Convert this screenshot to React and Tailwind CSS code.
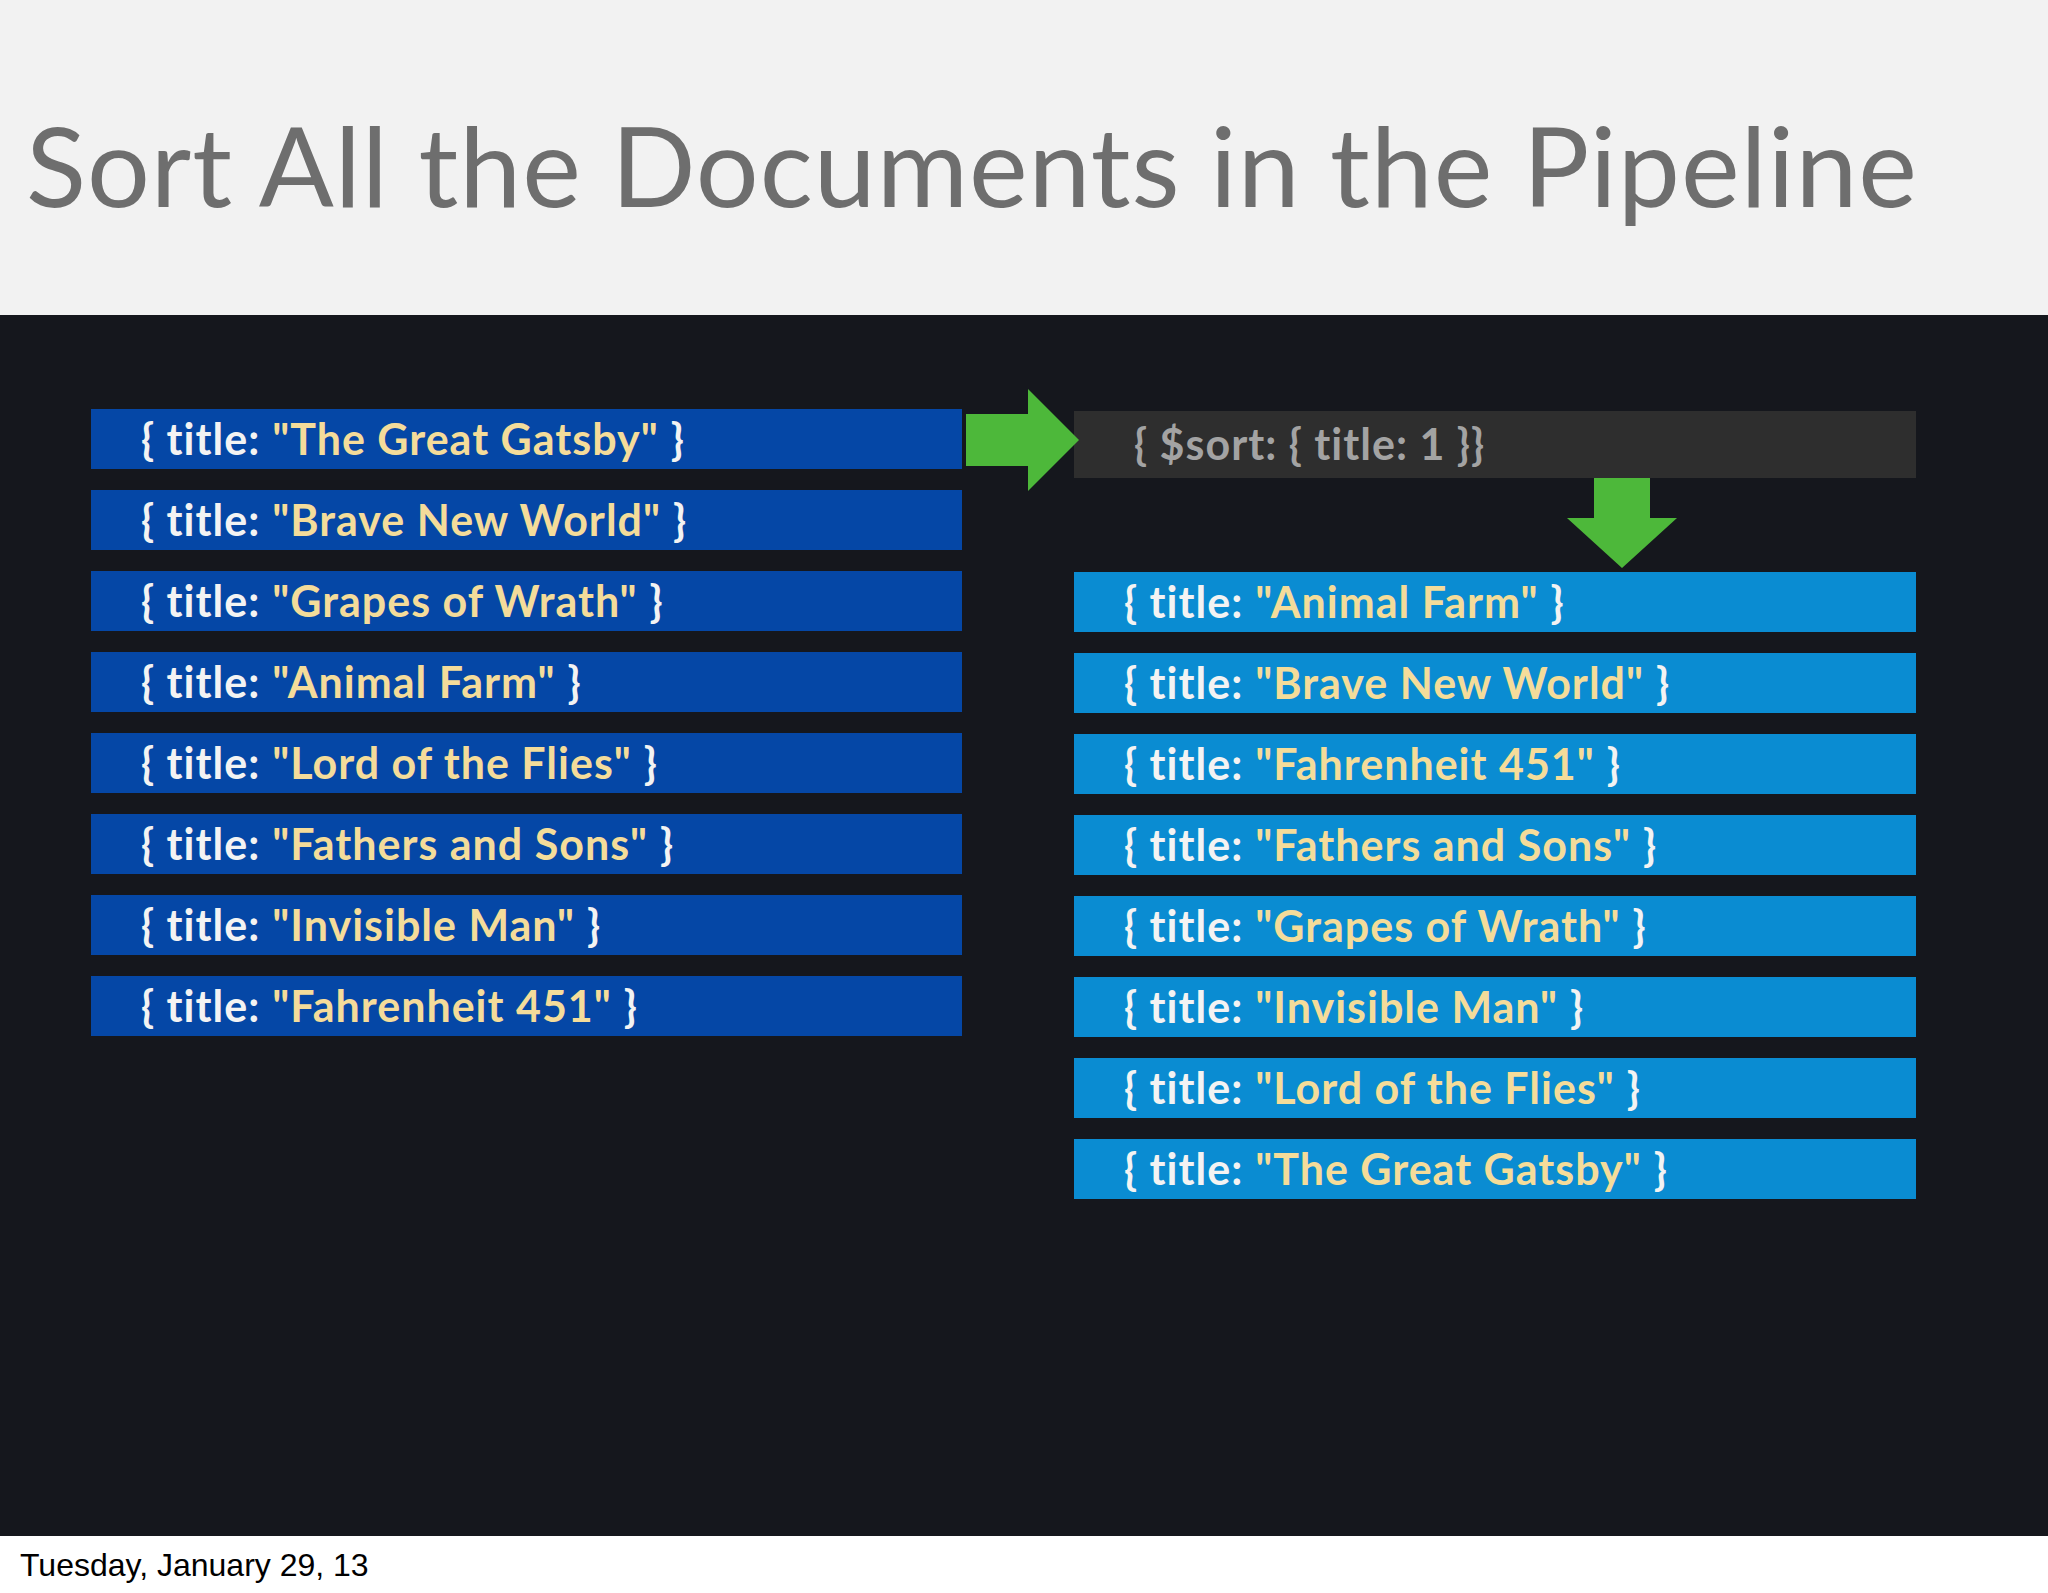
import React from 'react';

const left = ['The Great Gatsby', 'Brave New World', 'Grapes of Wrath', 'Animal Farm', 'Lord of the Flies', 'Fathers and Sons', 'Invisible Man', 'Fahrenheit 451'];
const right = ['Animal Farm', 'Brave New World', 'Fahrenheit 451', 'Fathers and Sons', 'Grapes of Wrath', 'Invisible Man', 'Lord of the Flies', 'The Great Gatsby'];

const Doc = ({ title, light }) => (
    <div className={`h-[60px] flex items-center pl-[50px] text-[43px] font-bold tracking-[1px] ${light ? 'bg-[#0a8cd2]' : 'bg-[#0547a6]'}`}>
        <span className="text-[#f3f3f3]">{'{ title: '}</span>
        <span className="text-[#f4dc9a] ml-[12px]">"{title}"</span>
        <span className="text-[#f3f3f3] ml-[12px]">{'}'}</span>
    </div>
);

export default function App() {
    return (
        <div className="w-[2048px] h-[1593px] flex flex-col bg-white" style={{ fontFamily: 'Lato, "Open Sans", sans-serif' }}>
            <div className="h-[315px] bg-[#f2f2f2] flex items-center pl-[26px] pt-[14px]">
                <h1 className="text-[111px] text-[#6e6e6e] tracking-[1px] font-normal">Sort All the Documents in the Pipeline</h1>
            </div>
            <div className="h-[1221px] bg-[#15171d] flex pl-[91px]">
                <div className="w-[871px] mt-[94px] flex flex-col gap-[21px]">
                    {left.map((t) => <Doc key={t} title={t} />)}
                </div>
                <div className="w-[1079px] relative">
                    <svg className="absolute left-[4px] top-[74px]" width="113" height="102" viewBox="0 0 113 102">
                        <polygon points="0,25 62,25 62,0 113,51 62,102 62,77 0,77" fill="#4db83a" />
                    </svg>
                </div>
                <div className="w-[842px] -ml-[967px] mt-[96px] flex flex-col">
                    <div className="h-[67px] bg-[#2e2e2e] flex items-center pl-[60px] text-[43px] font-bold text-[#a3a3a3] tracking-[1px]">
                        {'{ $sort: { title: 1 }}'}
                    </div>
                    <div className="h-[94px] flex justify-center pl-[254px]">
                        <svg width="110" height="90" viewBox="0 0 110 90">
                            <polygon points="27,0 83,0 83,40 110,40 55,90 0,40 27,40" fill="#4db83a" />
                        </svg>
                    </div>
                    <div className="flex flex-col gap-[21px]">
                        {right.map((t) => <Doc key={t} title={t} light />)}
                    </div>
                </div>
            </div>
            <div className="flex-1 flex items-center pl-[20px] text-[32px] text-black" style={{ fontFamily: '"Liberation Sans", sans-serif' }}>
                Tuesday, January 29, 13
            </div>
        </div>
    );
}
